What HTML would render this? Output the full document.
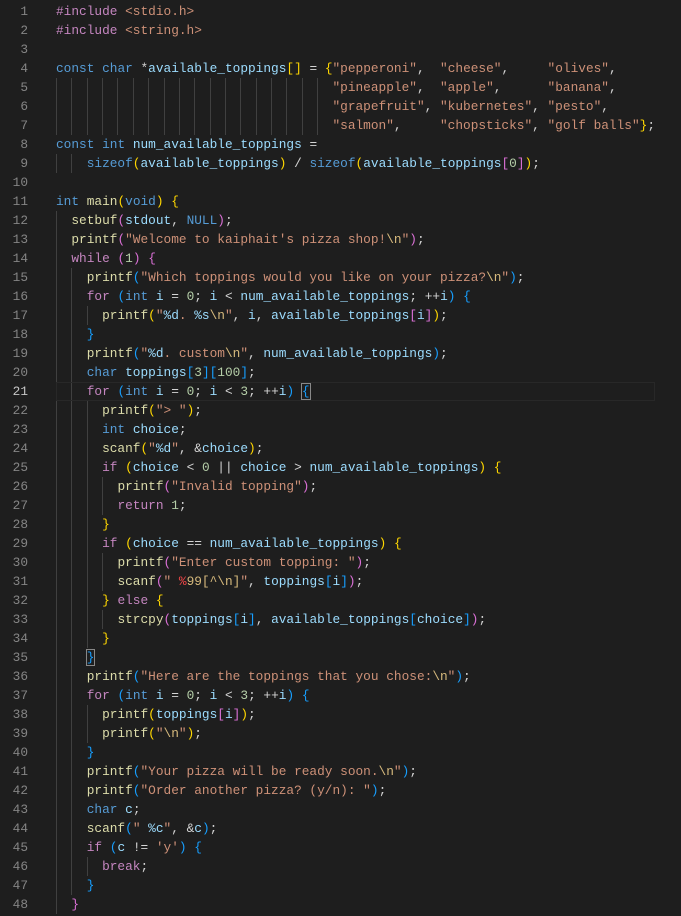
<!DOCTYPE html>
<html><head><meta charset="utf-8"><style>
html,body{margin:0;padding:0;background:#1e1e1e;width:681px;height:916px;overflow:hidden}
#ed{position:absolute;left:0;top:1.5px;font-family:"Liberation Mono",monospace;font-size:12.8px;}
.l{height:19px;line-height:19px;white-space:pre;position:relative;color:#d4d4d4}
.n{display:inline-block;width:28px;text-align:right;color:#858585;margin-right:28px}
.a .n{color:#c6c6c6}
.a .box{position:absolute;left:56px;right:0;top:0;height:17px;border:1px solid #282828}
i{display:inline-block;width:1.2em;height:19px;vertical-align:top;border-left:1px solid #404040;box-sizing:border-box}
.k{color:#569cd6}.c{color:#c586c0}.f{color:#dcdcaa}.s{color:#ce9178}.v{color:#9cdcfe}.u{color:#b5cea8}
.e{color:#d7ba7d}.r{color:#f44747}
.g{color:#ffd700}.p{color:#da70d6}.b{color:#179fff}
.hb{outline:1px solid #888;}
</style></head><body><div id="ed">
<div class="l"><span class="n">1</span><span class="c">#include</span> <span class="s">&lt;stdio.h&gt;</span></div>
<div class="l"><span class="n">2</span><span class="c">#include</span> <span class="s">&lt;string.h&gt;</span></div>
<div class="l"><span class="n">3</span></div>
<div class="l"><span class="n">4</span><span class="k">const</span> <span class="k">char</span> *<span class="v">available_toppings</span><span class="g">[]</span> = <span class="g">{</span><span class="s">"pepperoni"</span>,  <span class="s">"cheese"</span>,     <span class="s">"olives"</span>,</div>
<div class="l"><span class="n">5</span><i></i><i></i><i></i><i></i><i></i><i></i><i></i><i></i><i></i><i></i><i></i><i></i><i></i><i></i><i></i><i></i><i></i><i></i><span class="s">"pineapple"</span>,  <span class="s">"apple"</span>,      <span class="s">"banana"</span>,</div>
<div class="l"><span class="n">6</span><i></i><i></i><i></i><i></i><i></i><i></i><i></i><i></i><i></i><i></i><i></i><i></i><i></i><i></i><i></i><i></i><i></i><i></i><span class="s">"grapefruit"</span>, <span class="s">"kubernetes"</span>, <span class="s">"pesto"</span>,</div>
<div class="l"><span class="n">7</span><i></i><i></i><i></i><i></i><i></i><i></i><i></i><i></i><i></i><i></i><i></i><i></i><i></i><i></i><i></i><i></i><i></i><i></i><span class="s">"salmon"</span>,     <span class="s">"chopsticks"</span>, <span class="s">"golf balls"</span><span class="g">}</span>;</div>
<div class="l"><span class="n">8</span><span class="k">const</span> <span class="k">int</span> <span class="v">num_available_toppings</span> =</div>
<div class="l"><span class="n">9</span><i></i><i></i><span class="k">sizeof</span><span class="g">(</span><span class="v">available_toppings</span><span class="g">)</span> / <span class="k">sizeof</span><span class="g">(</span><span class="v">available_toppings</span><span class="p">[</span><span class="u">0</span><span class="p">]</span><span class="g">)</span>;</div>
<div class="l"><span class="n">10</span></div>
<div class="l"><span class="n">11</span><span class="k">int</span> <span class="f">main</span><span class="g">(</span><span class="k">void</span><span class="g">)</span> <span class="g">{</span></div>
<div class="l"><span class="n">12</span><i></i><span class="f">setbuf</span><span class="p">(</span><span class="v">stdout</span>, <span class="k">NULL</span><span class="p">)</span>;</div>
<div class="l"><span class="n">13</span><i></i><span class="f">printf</span><span class="p">(</span><span class="s">"Welcome to kaiphait's pizza shop!</span><span class="e">\n</span><span class="s">"</span><span class="p">)</span>;</div>
<div class="l"><span class="n">14</span><i></i><span class="c">while</span> <span class="p">(</span><span class="u">1</span><span class="p">)</span> <span class="p">{</span></div>
<div class="l"><span class="n">15</span><i></i><i></i><span class="f">printf</span><span class="b">(</span><span class="s">"Which toppings would you like on your pizza?</span><span class="e">\n</span><span class="s">"</span><span class="b">)</span>;</div>
<div class="l"><span class="n">16</span><i></i><i></i><span class="c">for</span> <span class="b">(</span><span class="k">int</span> <span class="v">i</span> = <span class="u">0</span>; <span class="v">i</span> &lt; <span class="v">num_available_toppings</span>; ++<span class="v">i</span><span class="b">)</span> <span class="b">{</span></div>
<div class="l"><span class="n">17</span><i></i><i></i><i></i><span class="f">printf</span><span class="g">(</span><span class="s">"</span><span class="v">%d</span><span class="s">. </span><span class="v">%s</span><span class="e">\n</span><span class="s">"</span>, <span class="v">i</span>, <span class="v">available_toppings</span><span class="p">[</span><span class="v">i</span><span class="p">]</span><span class="g">)</span>;</div>
<div class="l"><span class="n">18</span><i></i><i></i><span class="b">}</span></div>
<div class="l"><span class="n">19</span><i></i><i></i><span class="f">printf</span><span class="b">(</span><span class="s">"</span><span class="v">%d</span><span class="s">. custom</span><span class="e">\n</span><span class="s">"</span>, <span class="v">num_available_toppings</span><span class="b">)</span>;</div>
<div class="l"><span class="n">20</span><i></i><i></i><span class="k">char</span> <span class="v">toppings</span><span class="b">[</span><span class="u">3</span><span class="b">][</span><span class="u">100</span><span class="b">]</span>;</div>
<div class="l a"><span class="box"></span><span class="n">21</span><i></i><i></i><span class="c">for</span> <span class="b">(</span><span class="k">int</span> <span class="v">i</span> = <span class="u">0</span>; <span class="v">i</span> &lt; <span class="u">3</span>; ++<span class="v">i</span><span class="b">)</span> <span class="b hb">{</span></div>
<div class="l"><span class="n">22</span><i></i><i></i><i></i><span class="f">printf</span><span class="g">(</span><span class="s">"&gt; "</span><span class="g">)</span>;</div>
<div class="l"><span class="n">23</span><i></i><i></i><i></i><span class="k">int</span> <span class="v">choice</span>;</div>
<div class="l"><span class="n">24</span><i></i><i></i><i></i><span class="f">scanf</span><span class="g">(</span><span class="s">"</span><span class="v">%d</span><span class="s">"</span>, &amp;<span class="v">choice</span><span class="g">)</span>;</div>
<div class="l"><span class="n">25</span><i></i><i></i><i></i><span class="c">if</span> <span class="g">(</span><span class="v">choice</span> &lt; <span class="u">0</span> || <span class="v">choice</span> &gt; <span class="v">num_available_toppings</span><span class="g">)</span> <span class="g">{</span></div>
<div class="l"><span class="n">26</span><i></i><i></i><i></i><i></i><span class="f">printf</span><span class="p">(</span><span class="s">"Invalid topping"</span><span class="p">)</span>;</div>
<div class="l"><span class="n">27</span><i></i><i></i><i></i><i></i><span class="c">return</span> <span class="u">1</span>;</div>
<div class="l"><span class="n">28</span><i></i><i></i><i></i><span class="g">}</span></div>
<div class="l"><span class="n">29</span><i></i><i></i><i></i><span class="c">if</span> <span class="g">(</span><span class="v">choice</span> == <span class="v">num_available_toppings</span><span class="g">)</span> <span class="g">{</span></div>
<div class="l"><span class="n">30</span><i></i><i></i><i></i><i></i><span class="f">printf</span><span class="p">(</span><span class="s">"Enter custom topping: "</span><span class="p">)</span>;</div>
<div class="l"><span class="n">31</span><i></i><i></i><i></i><i></i><span class="f">scanf</span><span class="p">(</span><span class="s">" </span><span class="r">%</span><span class="e">99[^\n]</span><span class="s">"</span>, <span class="v">toppings</span><span class="b">[</span><span class="v">i</span><span class="b">]</span><span class="p">)</span>;</div>
<div class="l"><span class="n">32</span><i></i><i></i><i></i><span class="g">}</span> <span class="c">else</span> <span class="g">{</span></div>
<div class="l"><span class="n">33</span><i></i><i></i><i></i><i></i><span class="f">strcpy</span><span class="p">(</span><span class="v">toppings</span><span class="b">[</span><span class="v">i</span><span class="b">]</span>, <span class="v">available_toppings</span><span class="b">[</span><span class="v">choice</span><span class="b">]</span><span class="p">)</span>;</div>
<div class="l"><span class="n">34</span><i></i><i></i><i></i><span class="g">}</span></div>
<div class="l"><span class="n">35</span><i></i><i></i><span class="b hb">}</span></div>
<div class="l"><span class="n">36</span><i></i><i></i><span class="f">printf</span><span class="b">(</span><span class="s">"Here are the toppings that you chose:</span><span class="e">\n</span><span class="s">"</span><span class="b">)</span>;</div>
<div class="l"><span class="n">37</span><i></i><i></i><span class="c">for</span> <span class="b">(</span><span class="k">int</span> <span class="v">i</span> = <span class="u">0</span>; <span class="v">i</span> &lt; <span class="u">3</span>; ++<span class="v">i</span><span class="b">)</span> <span class="b">{</span></div>
<div class="l"><span class="n">38</span><i></i><i></i><i></i><span class="f">printf</span><span class="g">(</span><span class="v">toppings</span><span class="p">[</span><span class="v">i</span><span class="p">]</span><span class="g">)</span>;</div>
<div class="l"><span class="n">39</span><i></i><i></i><i></i><span class="f">printf</span><span class="g">(</span><span class="s">"</span><span class="e">\n</span><span class="s">"</span><span class="g">)</span>;</div>
<div class="l"><span class="n">40</span><i></i><i></i><span class="b">}</span></div>
<div class="l"><span class="n">41</span><i></i><i></i><span class="f">printf</span><span class="b">(</span><span class="s">"Your pizza will be ready soon.</span><span class="e">\n</span><span class="s">"</span><span class="b">)</span>;</div>
<div class="l"><span class="n">42</span><i></i><i></i><span class="f">printf</span><span class="b">(</span><span class="s">"Order another pizza? (y/n): "</span><span class="b">)</span>;</div>
<div class="l"><span class="n">43</span><i></i><i></i><span class="k">char</span> <span class="v">c</span>;</div>
<div class="l"><span class="n">44</span><i></i><i></i><span class="f">scanf</span><span class="b">(</span><span class="s">" </span><span class="v">%c</span><span class="s">"</span>, &amp;<span class="v">c</span><span class="b">)</span>;</div>
<div class="l"><span class="n">45</span><i></i><i></i><span class="c">if</span> <span class="b">(</span><span class="v">c</span> != <span class="s">'y'</span><span class="b">)</span> <span class="b">{</span></div>
<div class="l"><span class="n">46</span><i></i><i></i><i></i><span class="c">break</span>;</div>
<div class="l"><span class="n">47</span><i></i><i></i><span class="b">}</span></div>
<div class="l"><span class="n">48</span><i></i><span class="p">}</span></div>
</div></body></html>
